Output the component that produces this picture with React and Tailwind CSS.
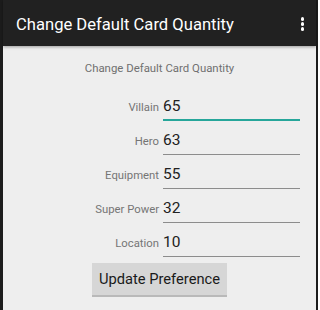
import React from 'react'

const fields = [
  { label: 'Villain', value: '65', focused: true },
  { label: 'Hero', value: '63' },
  { label: 'Equipment', value: '55' },
  { label: 'Super Power', value: '32' },
  { label: 'Location', value: '10' },
]

function Field({ label, value, focused }) {
  return (
    <div className="flex items-baseline">
      <span className="w-[156px] text-right text-[11.3px] text-[#757575]">{label}</span>
      <div
        className={`ml-[4px] w-[137px] h-[26px] pt-[1px] text-[15.5px] leading-[20px] text-[#212121] ${
          focused ? 'border-b-2 border-[#26a69a]' : 'border-b border-[#8c8c8c]'
        }`}
      >
        {value}
      </div>
    </div>
  )
}

export default function App() {
  return (
    <div
      className="w-[318px] h-[310px] bg-[#1c1c1c] pl-[3px] pr-[2px] flex flex-col overflow-hidden"
      style={{ fontFamily: 'Roboto, "Noto Sans", sans-serif' }}
    >
      <header className="h-[46px] shrink-0 flex items-center justify-between pl-[13px] pr-[12px] bg-[#212121] relative z-10 shadow-[0_1px_3px_rgba(0,0,0,0.35)]">
        <h1 className="text-white text-[16.6px] leading-none pt-[5px]">Change Default Card Quantity</h1>
        <div className="flex flex-col gap-[1.5px] pt-[2px]">
          <span className="block w-[3.5px] h-[3.5px] rounded-full bg-white" />
          <span className="block w-[3.5px] h-[3.5px] rounded-full bg-white" />
          <span className="block w-[3.5px] h-[3.5px] rounded-full bg-white" />
        </div>
      </header>

      <main className="flex-1 bg-[#eeeeee] flex flex-col">
        <p className="text-center text-[11.4px] leading-[16px] text-[#707070] pt-[14px] pb-[19px]">
          Change Default Card Quantity
        </p>
        <div className="flex flex-col gap-[8px]">
          {fields.map(f => (
            <Field key={f.label} {...f} />
          ))}
        </div>
        <button
          type="button"
          className="self-center mt-[6px] w-[135px] h-[34px] bg-[#d6d6d6] border-b-2 border-[#b9b9b9] text-[14.7px] text-[#1a1a1a]"
        >
          Update Preference
        </button>
      </main>
    </div>
  )
}
